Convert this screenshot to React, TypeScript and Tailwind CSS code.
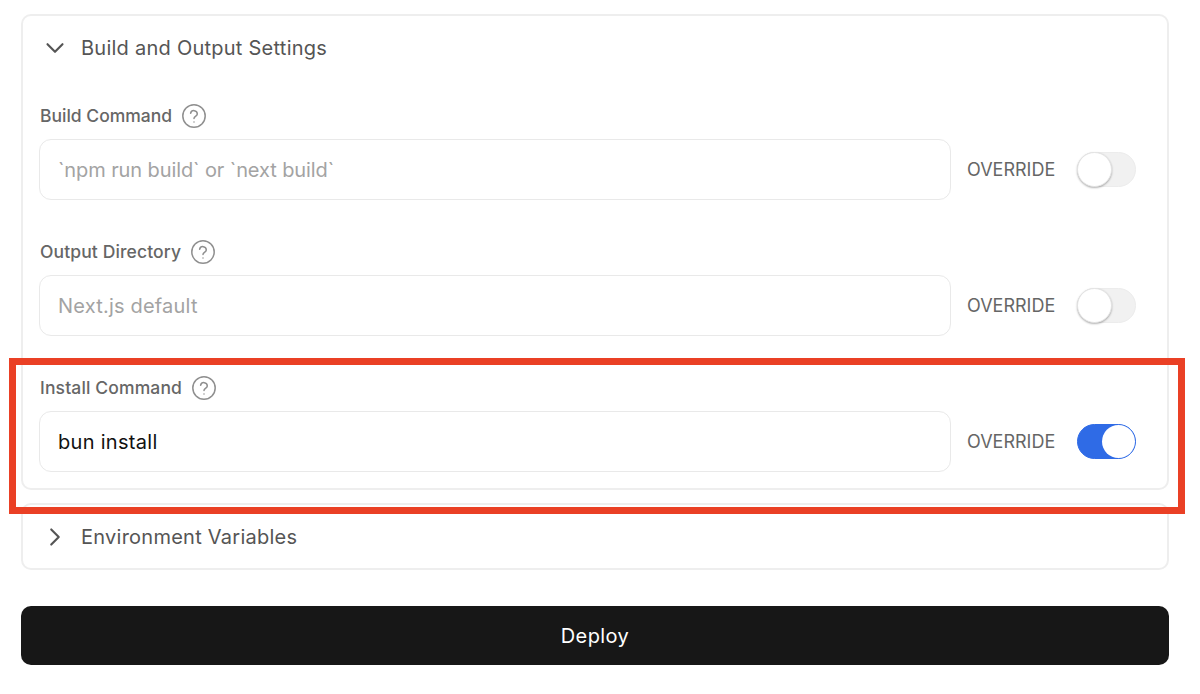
import { ChevronDown, ChevronRight } from "lucide-react";

const FIELDS = [
  { label: "Build Command", placeholder: "`npm run build` or `next build`", value: "", on: false, tracking: "tracking-[-0.1px]", labelTracking: "tracking-normal" },
  { label: "Output Directory", placeholder: "Next.js default", value: "", on: false, tracking: "tracking-[0.2px]", labelTracking: "tracking-[0.12px]" },
  { label: "Install Command", placeholder: "", value: "bun install", on: true, tracking: "tracking-[0.3px]", labelTracking: "tracking-[0.14px]" },
];

function HelpIcon() {
  return (
    <svg width="24" height="24" viewBox="0 0 24 24" fill="none" stroke="#8f8f8f" strokeWidth="1.5" strokeLinecap="round" strokeLinejoin="round">
      <circle cx="12" cy="12" r="11.2" />
      <path d="M8.6 9.2a3.4 3.4 0 0 1 6.7.8c0 2.1-3.3 2.7-3.3 4.4" />
      <path d="M12 18h.01" />
    </svg>
  );
}

function Toggle({ on }: { on: boolean }) {
  if (on) {
    return (
      <div className="flex h-[35px] w-[59px] justify-end rounded-full border border-[#2f6be6] bg-[#2f6be6]">
        <div className="h-[33px] w-[33px] rounded-full bg-white" />
      </div>
    );
  }
  return (
    <div className="flex h-[35px] w-[59px] rounded-full border border-[#ececec] bg-[#f1f1f1]">
      <div className="-ml-px -mt-px h-[35px] w-[35px] rounded-full border border-[#e4e4e4] bg-white shadow-[0_1px_2px_rgba(0,0,0,0.3)]" />
    </div>
  );
}

function Field({ label, placeholder, value, on, tracking, labelTracking }: (typeof FIELDS)[number]) {
  return (
    <div>
      <div className={`flex h-[24px] items-center gap-[10px] pl-[17px] text-[17.5px] font-medium text-[#666666] ${labelTracking}`}>
        {label}
        <HelpIcon />
      </div>
      <div className="mt-[11px] flex items-center pl-[16px]">
        <div className={`flex h-[61px] w-[912px] items-center rounded-[12px] border border-[#e9e9e9] bg-white pl-[18px] text-[20px] ${tracking}`}>
          {value ? <span className="text-[#111111]">{value}</span> : <span className="text-[#a3a3a3]">{placeholder}</span>}
        </div>
        <span className="ml-[16px] w-[88px] text-[18px] text-[#666666]">OVERRIDE</span>
        <div className="ml-[22px]">
          <Toggle on={on} />
        </div>
      </div>
    </div>
  );
}

export default function App() {
  return (
    <div className="relative h-[694px] w-[1200px] overflow-hidden bg-white font-['Inter',sans-serif]">
      <div className="ml-[21px] w-[1148px] pt-[14px]">
        {/* Build settings */}
        <div className="h-[476px] rounded-[10px] border-2 border-[#eeeeee]">
          <div className="flex h-[64px] items-center pl-[17px] text-[20px] tracking-[0.25px] text-[#555555]">
            <ChevronDown size={30} strokeWidth={1.7} className="text-[#555555]" />
            <span className="ml-[11px]">Build and Output Settings</span>
          </div>
          <div className="mt-[24px] flex flex-col gap-[40px]">
            {FIELDS.map((f) => (
              <Field key={f.label} {...f} />
            ))}
          </div>
        </div>

        {/* Environment variables */}
        <div className="mt-[13px] flex h-[67px] items-center rounded-[10px] border-2 border-[#eeeeee] pl-[17px] text-[20px] tracking-[0.25px] text-[#555555]">
          <ChevronRight size={30} strokeWidth={1.7} className="text-[#555555]" />
          <span className="ml-[11px]">Environment Variables</span>
        </div>

        <button className="mt-[36px] flex h-[59px] w-full items-center justify-center rounded-[10px] bg-[#171717] text-[20px] font-normal tracking-[0.4px] text-white">
          Deploy
        </button>
      </div>

      {/* Red highlight drawn over the screenshot */}
      <div className="absolute left-[9px] top-[358px] h-[156px] w-[1176px] border-[7px] border-[#ea4025]" />
    </div>
  );
}
